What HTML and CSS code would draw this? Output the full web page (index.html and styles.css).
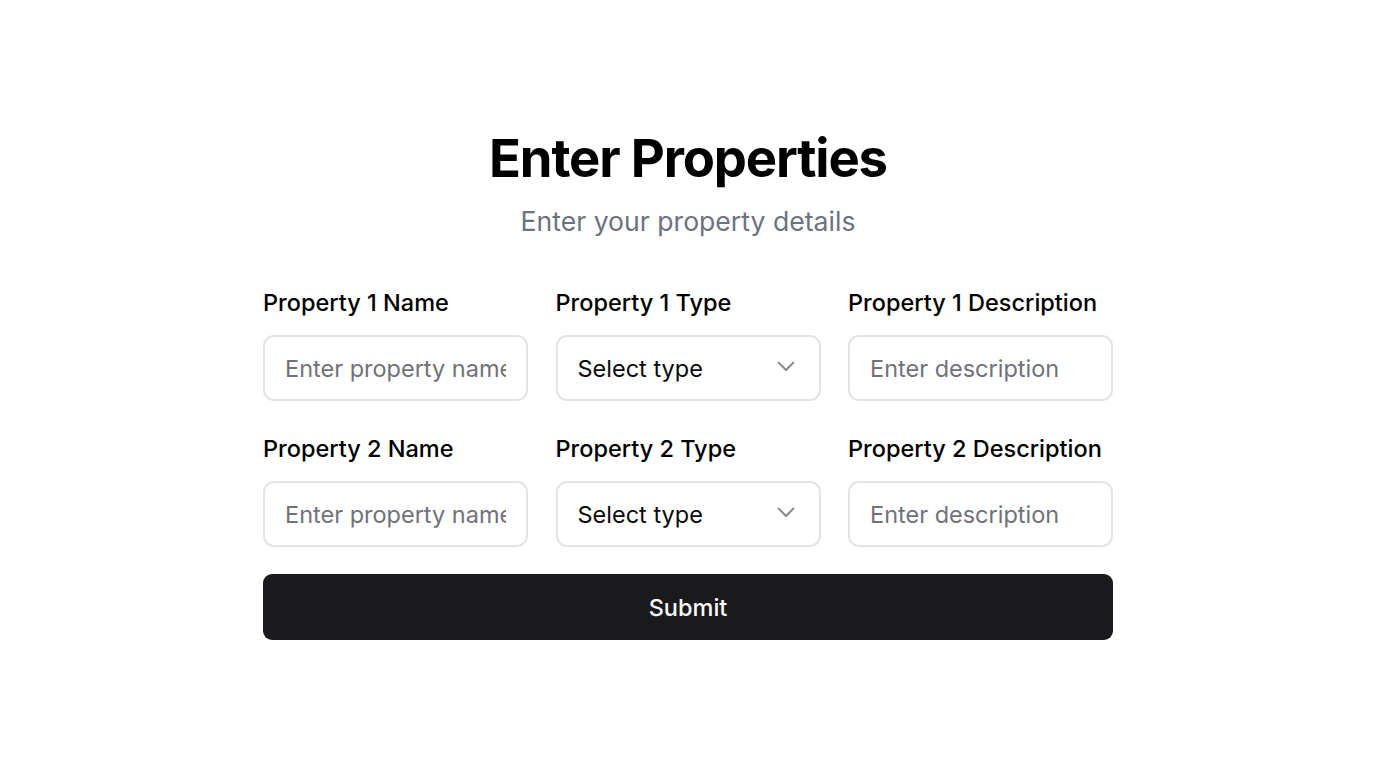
FILE: index.html
```html
<!DOCTYPE html>
<html lang="en">
<head>
<meta charset="utf-8">
<title>Enter Properties</title>
<link rel="stylesheet" href="styles.css">
</head>
<body>
<main class="page">
  <section class="card">
    <header class="head">
      <h1 class="title">Enter Properties</h1>
      <p class="subtitle">Enter your property details</p>
    </header>
    <form class="form">
      <div class="grid">
        <div class="field">
          <label class="label">Property 1 Name</label>
          <input class="input" type="text" placeholder="Enter property name">
        </div>
        <div class="field">
          <label class="label">Property 1 Type</label>
          <div class="select-wrap">
            <select class="input select">
              <option>Select type</option>
            </select>
            <svg class="chev" width="32" height="32" viewBox="0 0 24 24" fill="none" stroke="currentColor" stroke-width="1.5" stroke-linecap="round" stroke-linejoin="round"><path d="M6.5 9.5l5.5 5.5 5.5-5.5"/></svg>
          </div>
        </div>
        <div class="field">
          <label class="label">Property 1 Description</label>
          <input class="input" type="text" placeholder="Enter description">
        </div>
        <div class="field">
          <label class="label">Property 2 Name</label>
          <input class="input" type="text" placeholder="Enter property name">
        </div>
        <div class="field">
          <label class="label">Property 2 Type</label>
          <div class="select-wrap">
            <select class="input select">
              <option>Select type</option>
            </select>
            <svg class="chev" width="32" height="32" viewBox="0 0 24 24" fill="none" stroke="currentColor" stroke-width="1.5" stroke-linecap="round" stroke-linejoin="round"><path d="M6.5 9.5l5.5 5.5 5.5-5.5"/></svg>
          </div>
        </div>
        <div class="field">
          <label class="label">Property 2 Description</label>
          <input class="input" type="text" placeholder="Enter description">
        </div>
      </div>
      <button class="submit" type="button">Submit</button>
    </form>
  </section>
</main>
</body>
</html>
```
FILE: styles.css
```css
* { box-sizing: border-box; }
html, body { margin: 0; padding: 0; background: #ffffff; }
body {
  font-family: Inter, "Noto Sans", sans-serif;
  color: #09090b;
}
.page {
  height: 768px;
  display: flex;
  align-items: center;
  justify-content: center;
}
.card {
  width: 850px;
  display: flex;
  flex-direction: column;
}
.head {
  text-align: center;
  margin-bottom: 48px;
}
.title {
  margin: 0;
  font-size: 52.6px;
  line-height: 60px;
  font-weight: 700;
  letter-spacing: -0.022em;
  color: #000;
}
.subtitle {
  margin: 15px 0 0;
  font-size: 26.6px;
  line-height: 36px;
  color: #6b7280;
}
.form {
  display: flex;
  flex-direction: column;
  gap: 27px;
}
.grid {
  display: grid;
  grid-template-columns: repeat(3, 1fr);
  column-gap: 27.5px;
  row-gap: 32px;
}
.field {
  display: flex;
  flex-direction: column;
  gap: 16px;
}
.label {
  font-size: 23.5px;
  line-height: 32px;
  font-weight: 500;
  color: #000;
}
.input {
  width: 100%;
  height: 66px;
  border: 2px solid #e4e4e7;
  border-radius: 11px;
  padding: 0 20px;
  font-family: inherit;
  font-size: 23.5px;
  color: #09090b;
  background: #fff;
  outline: none;
}
.input::placeholder { color: #71717a; }
.select-wrap { position: relative; }
.select {
  appearance: none;
  -webkit-appearance: none;
}
.chev {
  position: absolute;
  right: 19px;
  top: 15px;
  color: #71717a;
  opacity: 0.85;
  pointer-events: none;
}
.submit {
  height: 66px;
  border: none;
  border-radius: 9px;
  background: #1a1a1c;
  color: #fafafa;
  font-family: inherit;
  font-size: 23.5px;
  font-weight: 500;
}
```
